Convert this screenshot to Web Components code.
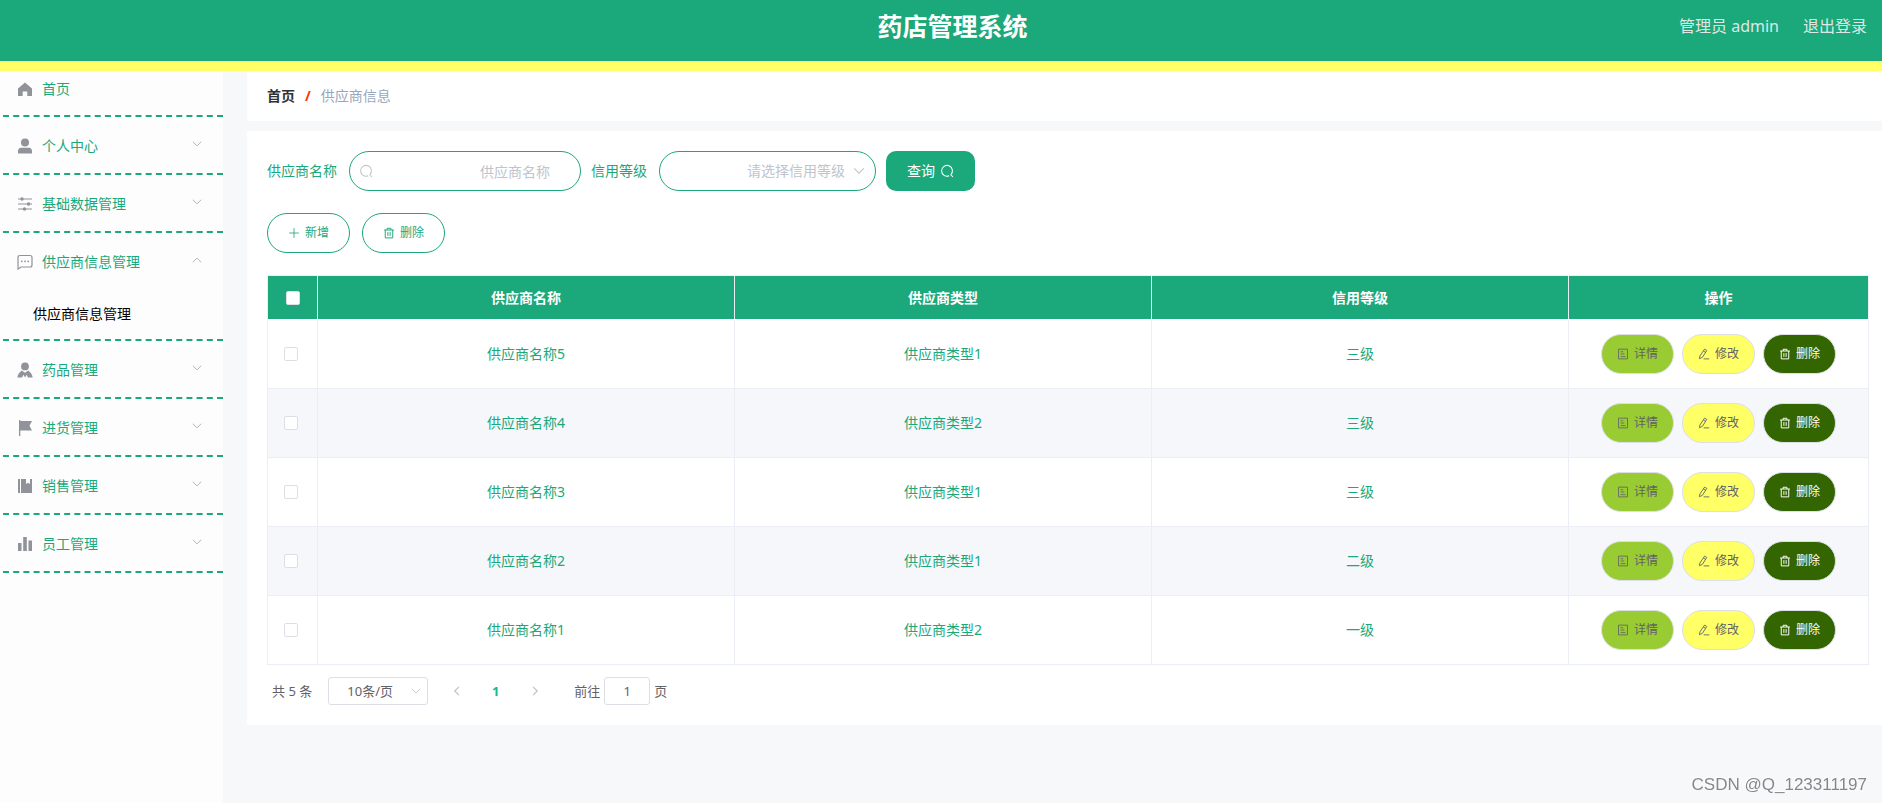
<!DOCTYPE html>
<html lang="zh-CN">
<head>
<meta charset="utf-8">
<title>药店管理系统</title>
<style>
  html, body { margin: 0; }
  body {
    --green: #1ba87b;
    --yellow: #ffff66;
    --line: #ebeef5;
    --font: "Noto Sans", "Noto Sans CJK SC", sans-serif;
    font: 14px/20px var(--font);
    color: var(--green);
    background: #f7f8fa;
  }
</style>
</head>
<body>
<pharmacy-app></pharmacy-app>

<script>
const define = (name, css, html, setup) => {
  const tpl = document.createElement('template');
  tpl.innerHTML = `<style>*{box-sizing:border-box}${css}</style>${html}`;
  customElements.define(name, class extends HTMLElement {
    connectedCallback() {
      if (this.shadowRoot) return;
      this.attachShadow({ mode: 'open' }).append(tpl.content.cloneNode(true));
      if (setup) setup(this, this.shadowRoot);
    }
  });
};

const ICONS = {
  home: '<path fill="currentColor" d="M8 1.500 1 7.500V15h4.700v-4.500h4.600V15H15V7.500z"/>',
  user: '<circle cx="8" cy="4.500" r="4" fill="currentColor"/><path fill="currentColor" d="M1 15.500v-2.500Q1.200 10 4 9.800h8q2.800.2 3 3.200v2.500z"/>',
  sliders: '<g fill="none" stroke="currentColor" stroke-width="1.200"><path d="M1 3h14M1 8h14M1 13h14"/></g><g fill="currentColor"><circle cx="5" cy="3" r="1.700"/><circle cx="11.500" cy="8" r="1.700"/><circle cx="7.500" cy="13" r="1.700"/></g>',
  chat: '<path fill="none" stroke="currentColor" stroke-width="1.200" d="M1 15V3.500Q1 1.500 3 1.500h10q2 0 2 2v7.500q0 2-2 2H4z"/><g fill="currentColor"><circle cx="4.800" cy="7.300" r=".9"/><circle cx="8" cy="7.300" r=".9"/><circle cx="11.200" cy="7.300" r=".9"/></g>',
  custom: '<circle cx="8" cy="4.400" r="3.900" fill="currentColor"/><path fill="currentColor" d="M.3 15.500Q1 11 4.800 8.500L8 10.800l3.200-2.300q3.800 2.500 4.500 7H11L9.500 12.800 8 15.500l-1.500-2.700L5 15.500z"/>',
  flag: '<path fill="currentColor" d="M2 0h1.300v1H15l-2.500 4.800L15 10.500H3.300V16H2z"/>',
  book: '<path fill="currentColor" d="M1 1h2v14H1zM4 1h5v5l2-1.300L13 6V1h2v14H4z"/>',
  bars: '<path fill="currentColor" d="M1 7h3.500v8H1zM6.200 1h3.600v14H6.200zM11.500 4.500H15V15h-3.500z"/>',
  down: '<path fill="none" stroke="currentColor" stroke-width="1.200" d="m2.500 5 5.500 5.500L13.500 5"/>',
  up: '<path fill="none" stroke="currentColor" stroke-width="1.200" d="m2.500 11 5.500-5.500 5.500 5.500"/>',
  left: '<path fill="none" stroke="currentColor" stroke-width="1.700" d="M10.500 2.500 5 8l5.500 5.500"/>',
  right: '<path fill="none" stroke="currentColor" stroke-width="1.700" d="M5.500 2.500 11 8l-5.500 5.500"/>',
  search: '<path fill="none" stroke="currentColor" stroke-width="1.200" d="M12.300 12.300A6.200 6.200 0 1 0 10.500 13.500M12 12l2.800 2.800"/>',
  plus: '<path fill="none" stroke="currentColor" stroke-width="1.100" d="M8 1.500v13M1.500 8h13"/>',
  trash: '<path fill="none" stroke="currentColor" stroke-width="1.300" d="M1.500 4h13M5.500 4V1.700h5V4M3 4v10.500h10V4M6.500 6.800v5M9.500 6.800v5"/>',
  doc: '<path fill="none" stroke="currentColor" stroke-width="1.100" d="M2 1.500h12v13H2zM4.800 5h3.400M4.800 8h5M4.800 11.500h6.500"/>',
  edit: '<path fill="none" stroke="currentColor" stroke-width="1.200" d="M8.800 1.500 11.700 3.300 6 12.300 2 14.300 2.500 10.700zM7.200 4l3 1.900M7.500 14.500h7.500"/>'
};

define('ui-icon',
  ':host{display:inline-block;width:14px;height:14px;flex:none}svg{display:block;width:100%;height:100%}',
  '<svg viewBox="0 0 16 16" aria-hidden="true"></svg>',
  (el, root) => { root.querySelector('svg').innerHTML = ICONS[el.getAttribute('name')]; });

define('pill-button', `
  :host{display:block}
  button{display:flex;align-items:center;justify-content:center;gap:5px;width:100%;height:40px;padding:0;
    border:1px solid var(--pill-border,var(--green));border-radius:20px;background:var(--pill-bg,#fff);
    color:var(--pill-color,var(--green));font:12px/16px var(--font);white-space:nowrap;cursor:pointer}
  ui-icon{width:12px;height:12px}`,
  '<button type="button"><ui-icon></ui-icon><slot></slot></button>',
  (el, root) => {
    const icon = document.createElement('ui-icon');
    icon.setAttribute('name', el.getAttribute('icon'));
    root.querySelector('ui-icon').replaceWith(icon);
  });

define('app-header', `
  :host{display:block;background:var(--green);border-bottom:10px solid var(--yellow)}
  header{display:grid;grid-template-columns:1fr auto 1fr;align-items:start;height:61px;padding:8px 15px 0 38px}
  h1{grid-column:2;margin:0;font-size:25px;line-height:36px;font-weight:700;color:#fff}
  nav{display:flex;justify-content:flex-end;gap:24px;font-size:16px;line-height:36px;color:#dfe8e4}
  a{color:inherit;text-decoration:none}`,
  '<header><h1>药店管理系统</h1><nav><span>管理员 admin</span><a href="#logout">退出登录</a></nav></header>');

define('nav-item', `
  :host{display:block;margin-left:3px;border-bottom:2px dashed var(--green)}
  a{display:flex;align-items:center;gap:9px;height:56px;padding:2px 20px 0 14px;color:inherit;text-decoration:none}
  ui-icon{width:16px;height:16px;color:#909399}
  span{flex:1}
  .arrow{width:12px;height:12px;margin-bottom:4px;color:#a8abb2}
  :host([first]) a{height:44px;padding-bottom:10px}`,
  '<a href="#"><span><slot></slot></span></a><slot name="sub"></slot>',
  (el, root) => {
    const a = root.querySelector('a');
    a.insertAdjacentHTML('afterbegin', `<ui-icon name="${el.getAttribute('icon')}"></ui-icon>`);
    const arrow = el.getAttribute('arrow');
    if (arrow) a.insertAdjacentHTML('beforeend', `<ui-icon class="arrow" name="${arrow}"></ui-icon>`);
  });

define('side-nav', `
  :host{display:block;flex:none;width:223px;background:#fdfdfd}
  .sub{display:block;padding:15px 0 15px 30px;color:#000;text-decoration:none}`,
  `<nav>
    <nav-item icon="home" first>首页</nav-item>
    <nav-item icon="user" arrow="down">个人中心</nav-item>
    <nav-item icon="sliders" arrow="down">基础数据管理</nav-item>
    <nav-item icon="chat" arrow="up">供应商信息管理<a class="sub" slot="sub" href="#supplier">供应商信息管理</a></nav-item>
    <nav-item icon="custom" arrow="down">药品管理</nav-item>
    <nav-item icon="flag" arrow="down">进货管理</nav-item>
    <nav-item icon="book" arrow="down">销售管理</nav-item>
    <nav-item icon="bars" arrow="down">员工管理</nav-item>
  </nav>`);

define('crumb-bar', `
  :host{display:block;padding:15px 20px;background:#fff;border-radius:4px 0 0 4px}
  nav{display:flex;gap:10px}
  a{color:#303133;font-weight:700;text-decoration:none}
  i{font-style:normal;font-weight:700;color:#ff3300}
  span{color:#97a8be}`,
  '<nav aria-label="面包屑"><a href="#home">首页</a><i>/</i><span>供应商信息</span></nav>');

define('search-form', `
  :host{display:block}
  form{display:flex;align-items:center;gap:10px}
  .field{display:flex;align-items:center;gap:12px}
  .box{display:grid;align-items:center}
  .box>*{grid-area:1/1}
  .box ui-icon{color:#c0c4cc;pointer-events:none;z-index:1}
  .lead{margin-left:10px}
  .tail{justify-self:end;margin-right:10px}
  input,select{width:232px;height:40px;margin:0;padding:0 30px;border:1px solid var(--green);border-radius:20px;
    background:#fff;font:14px/20px var(--font);color:#606266;text-align:right;outline:0}
  input::placeholder{color:#c0c4cc;opacity:1}
  select{appearance:none;width:217px;color:#c0c4cc;text-align-last:right}
  button{display:flex;align-items:center;gap:5px;height:40px;padding:0 21px;border:0;border-radius:10px;
    background:var(--green);color:#fff;font:14px/20px var(--font);cursor:pointer}`,
  `<form>
    <div class="field"><label for="name">供应商名称</label>
      <div class="box"><input id="name" type="text" placeholder="供应商名称"><ui-icon class="lead" name="search"></ui-icon></div></div>
    <div class="field"><label for="level">信用等级</label>
      <div class="box"><select id="level"><option>请选择信用等级</option></select><ui-icon class="tail" name="down"></ui-icon></div></div>
    <button type="button">查询<ui-icon name="search"></ui-icon></button>
  </form>`);

const rows = [
  ['供应商名称5', '供应商类型1', '三级'],
  ['供应商名称4', '供应商类型2', '三级'],
  ['供应商名称3', '供应商类型1', '三级'],
  ['供应商名称2', '供应商类型1', '二级'],
  ['供应商名称1', '供应商类型2', '一级']
];

define('supplier-table', `
  :host{display:block}
  table{width:100%;table-layout:fixed;border-collapse:separate;border-spacing:0;border:1px solid var(--line);border-width:1px 0 0 1px}
  .pick{width:50px}.ops{width:300px}
  th,td{padding:0;border:1px solid var(--line);border-width:0 1px 1px 0;text-align:center}
  th{height:44px;background:var(--green);color:#fff;font-weight:700;border-bottom-color:#fff}
  td{height:69px}
  tbody tr{background:#fff}
  tbody tr:nth-child(even){background:#f5f7fa}
  input{appearance:none;display:block;width:14px;height:14px;margin:0 0 0 16px;border:1px solid #dcdfe6;border-radius:2px;background:#fff}
  th input{margin-left:18px}
  .acts{display:flex;justify-content:center;gap:8px}
  pill-button{width:73px;--pill-border:#dcdfe6;--pill-color:#606266}
  .view{--pill-bg:#99cc33}
  .edit{--pill-bg:var(--yellow)}
  .del{--pill-bg:#336600;--pill-color:#fff}`,
  `<table>
    <colgroup><col class="pick"><col><col><col><col class="ops"></colgroup>
    <thead><tr><th><input type="checkbox" aria-label="全选"></th><th>供应商名称</th><th>供应商类型</th><th>信用等级</th><th>操作</th></tr></thead>
    <tbody>${rows.map(r => `<tr><td><input type="checkbox" aria-label="${r[0]}"></td>${r.map(c => `<td>${c}</td>`).join('')}
      <td><div class="acts"><pill-button class="view" icon="doc">详情</pill-button><pill-button class="edit" icon="edit">修改</pill-button><pill-button class="del" icon="trash">删除</pill-button></div></td></tr>`).join('')}</tbody>
  </table>`);

define('page-bar', `
  :host{display:flex;align-items:center;padding:0 5px;color:#606266;font-size:13px;line-height:28px}
  .size{display:grid;align-items:center;margin:0 9px 0 16px}
  .size>*{grid-area:1/1}
  .size ui-icon{justify-self:end;margin-right:6px;width:12px;height:12px;color:#c0c4cc;pointer-events:none;z-index:1}
  select,input{height:28px;margin:0;border:1px solid #dcdfe6;border-radius:3px;background:#fff;color:#606266;
    font:13px/20px var(--font);text-align:center;outline:0}
  select{appearance:none;width:100px;padding:0 24px 0 8px;text-align-last:center}
  button{display:grid;place-items:center;width:39px;height:28px;padding:0;border:0;background:none;font:700 13px/28px var(--font);color:#c0c4cc}
  button ui-icon{width:12px;height:12px}
  .on{color:#18b98b}
  label{margin-left:20px}
  input{width:46px;margin:0 4px;padding:0 3px}`,
  `<span>共 5 条</span>
  <span class="size"><select aria-label="每页条数"><option>10条/页</option></select><ui-icon name="down"></ui-icon></span>
  <button type="button" aria-label="上一页"><ui-icon name="left"></ui-icon></button>
  <button type="button" class="on">1</button>
  <button type="button" aria-label="下一页"><ui-icon name="right"></ui-icon></button>
  <label for="go">前往</label><input id="go" type="text" value="1"><span>页</span>`);

define('pharmacy-app', `
  :host{display:flex;flex-direction:column;min-height:100vh}
  .body{display:flex;flex:1;gap:24px}
  main{flex:1;min-width:0}
  section{margin-top:10px;padding:20px 13px 20px 20px;background:#fff}
  .tools{display:flex;gap:12px;margin:22px 0}
  .tools pill-button{width:83px}
  page-bar{margin-top:12px}
  footer{position:fixed;right:15px;bottom:7px;font:17px/22px "Liberation Sans",sans-serif;color:#85878b;text-shadow:-1px -1px 0 #fff}`,
  `<app-header></app-header>
  <div class="body">
    <side-nav></side-nav>
    <main>
      <crumb-bar></crumb-bar>
      <section>
        <search-form></search-form>
        <div class="tools"><pill-button icon="plus">新增</pill-button><pill-button icon="trash">删除</pill-button></div>
        <supplier-table></supplier-table>
        <page-bar></page-bar>
      </section>
    </main>
  </div>
  <footer>CSDN @Q_123311197</footer>`);
</script>
</body>
</html>
